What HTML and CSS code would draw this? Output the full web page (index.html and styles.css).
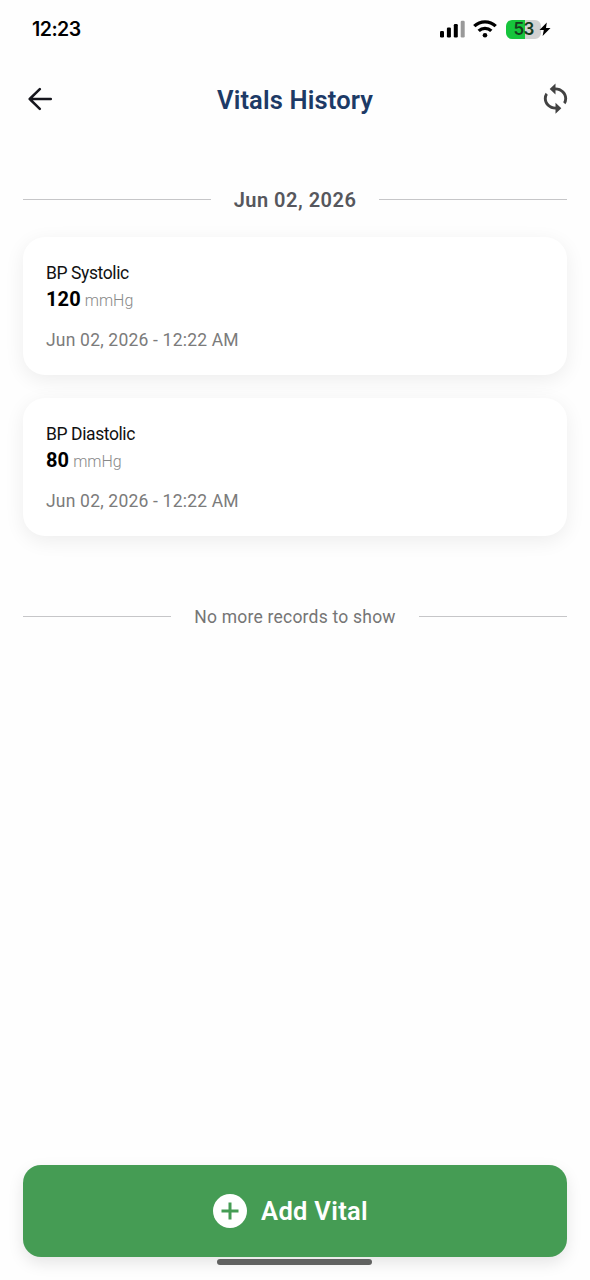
FILE: index.html
```html
<!DOCTYPE html>
<html lang="en">
<head>
<meta charset="utf-8">
<title>Vitals History</title>
<link rel="stylesheet" href="styles.css">
</head>
<body>
<div class="screen">
  <div class="status-bar">
    <span class="clock">12:23</span>
    <div class="indicators">
      <svg class="signal" width="26" height="18" viewBox="0 0 26 18">
        <rect x="0" y="11" width="4" height="6.5" rx="1.2"/>
        <rect x="6.9" y="7.5" width="4" height="10" rx="1.2"/>
        <rect x="13.8" y="4" width="4" height="13.5" rx="1.2"/>
        <rect x="20.7" y="0.8" width="4" height="16.7" rx="1.2" fill="#999"/>
      </svg>
      <svg class="wifi" width="24" height="18" viewBox="0 0 24 18" fill="none" stroke="#000" stroke-width="3.3">
        <path d="M1.3 6.2a15.2 15.2 0 0 1 21.4 0"/>
        <path d="M5.7 10.9a9 9 0 0 1 12.6 0"/>
        <circle cx="12" cy="15.3" r="2.3" fill="#000" stroke="none"/>
      </svg>
      <div class="battery"><span>53</span></div>
      <svg class="bolt" width="12" height="15" viewBox="0 0 12 15"><path d="M7.8.5.5 8.1h4.3l-1.2 6 7.9-8H7z"/></svg>
    </div>
  </div>

  <header class="app-bar">
    <svg class="back" width="25" height="24" viewBox="0 0 25 24" fill="none" stroke="#16161d" stroke-width="2.5" stroke-linecap="round" stroke-linejoin="round"><path d="M22.8 12H1.7M11.8 2.2 1.7 12l10.1 9.8"/></svg>
    <h1>Vitals History</h1>
    <svg class="sync" width="35" height="33" viewBox="0 0 24 24" preserveAspectRatio="none"><path d="M12 4V1L8 5l4 4V6c3.31 0 6 2.69 6 6 0 1.01-.25 1.97-.7 2.8l1.46 1.46A7.93 7.93 0 0 0 20 12c0-4.42-3.58-8-8-8zm0 14c-3.31 0-6-2.69-6-6 0-1.01.25-1.97.7-2.8L5.24 7.74A7.93 7.93 0 0 0 4 12c0 4.42 3.58 8 8 8v3l4-4-4-4v3z"/></svg>
  </header>

  <main>
    <div class="divider"><span class="date">Jun 02, 2026</span></div>
    <section class="card">
      <div class="name">BP Systolic</div>
      <div class="reading"><b>120</b> <span class="unit">mmHg</span></div>
      <div class="time">Jun 02, 2026 - 12:22 AM</div>
    </section>
    <section class="card">
      <div class="name">BP Diastolic</div>
      <div class="reading"><b>80</b> <span class="unit">mmHg</span></div>
      <div class="time">Jun 02, 2026 - 12:22 AM</div>
    </section>
    <div class="divider end"><span class="no-more">No more records to show</span></div>
  </main>

  <button class="add">
    <svg width="34" height="34" viewBox="0 0 34 34"><circle cx="17" cy="17" r="17" fill="#fff"/><path d="M17 8.5v17M8.5 17h17" stroke="#459c54" stroke-width="3"/></svg>
    <span>Add Vital</span>
  </button>
  <div class="home-indicator"></div>
</div>
</body>
</html>
```
FILE: styles.css
```css
* { box-sizing: border-box; }
body { margin: 0; background: #fefefe; font-family: Roboto, sans-serif; }
.screen { width: 590px; height: 1280px; display: flex; flex-direction: column; overflow: hidden; background: #fefefe; }
.status-bar { height: 58px; flex: none; padding: 0 39px 0 32px; display: flex; align-items: center; justify-content: space-between; }
.clock { font: 600 19.5px/24px Inter, sans-serif; letter-spacing: -0.5px; color: #000; }
.indicators { display: flex; align-items: center; }
.wifi { margin-left: 7px; }
.battery { width: 35px; height: 19px; margin-left: 9px; border-radius: 6px; background: linear-gradient(90deg, #16c43c 54%, #d2d2d2 54%); text-align: center; font: 600 17px/19px Inter, sans-serif; letter-spacing: -0.8px; color: #173b1e; }
.bolt { margin-left: -2px; }
.app-bar { height: 82px; flex: none; padding: 0 17px 0 28px; display: grid; grid-template-columns: 35px 1fr 35px; align-items: center; }
h1 { margin: 0; padding: 2px 11px 0 0; text-align: center; font-size: 25.5px; line-height: 32px; font-weight: 600; letter-spacing: 0.15px; color: #1d3a66; }
.sync { margin-top: -1px; fill: #424242; }
main { flex: 1; padding: 44px 23px 0; }
.divider { height: 32px; display: flex; align-items: center; gap: 23px; }
.divider::before, .divider::after { content: ""; flex: 1; height: 1px; margin-top: -2px; background: #c6c6c8; }
.date { font-size: 20px; font-weight: 600; line-height: 32px; letter-spacing: 0.5px; color: #56575d; }
.card { height: 138px; padding: 25px 23px 0; border-radius: 22px; background: #fff; box-shadow: 0 5px 20px rgba(0, 0, 0, 0.07); }
.divider + .card { margin-top: 21px; }
.card + .card { margin-top: 23px; }
.name { font-size: 17.5px; line-height: 22px; letter-spacing: -0.4px; color: #111; }
.reading { margin-top: 2px; line-height: 27px; font-size: 16px; color: #000; }
.reading b { font-size: 20px; font-weight: 700; letter-spacing: 0.1px; }
.unit { font-weight: 300; color: #888; }
.time { margin-top: 15px; font-size: 17.5px; line-height: 22px; letter-spacing: 0.2px; color: #7b7b7b; }
.end { margin-top: 65px; }
.no-more { font-size: 17.5px; line-height: 32px; letter-spacing: 0.22px; color: #757575; }
.add { height: 92px; flex: none; margin: 0 23px; padding: 0 9px 0 0; border: 0; border-radius: 18px; background: #459c54; box-shadow: 0 6px 16px rgba(0, 0, 0, 0.1); display: flex; align-items: center; justify-content: center; gap: 14px; color: #fff; font: 600 25.5px/32px Roboto, sans-serif; letter-spacing: 0.3px; }
.home-indicator { width: 155px; height: 6px; flex: none; margin: 2px 0 15px 217px; border-radius: 3px; background: #606160; position: relative; }
```
